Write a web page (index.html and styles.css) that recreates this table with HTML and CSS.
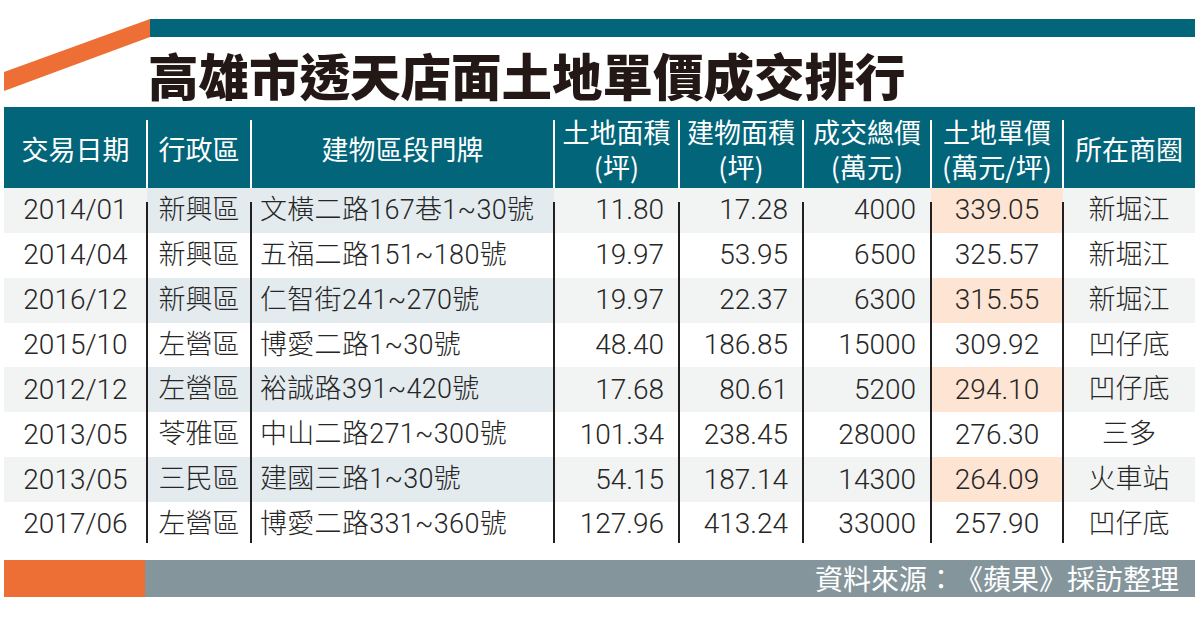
FILE: index.html
```html
<!DOCTYPE html>
<html lang="zh-Hant">
<head>
<meta charset="utf-8">
<title>高雄市透天店面土地單價成交排行</title>
<link rel="stylesheet" href="styles.css">
</head>
<body>
<div class="page">
  <div class="top">
    <svg class="slash" width="146" height="107" viewBox="0 0 146 107" aria-hidden="true">
      <polygon points="0,72 146,19 146,37 0,91" fill="#ee6f35"/>
    </svg>
    <div class="top-main">
      <div class="bar"></div>
      <h1 class="title">高雄市透天店面土地單價成交排行</h1>
    </div>
  </div>

  <div class="table">
    <div class="thead">
      <div class="c">交易日期</div>
      <div class="c">行政區</div>
      <div class="c">建物區段門牌</div>
      <div class="c"><span class="ln">土地面積</span><span class="ln">(坪)</span></div>
      <div class="c"><span class="ln">建物面積</span><span class="ln">(坪)</span></div>
      <div class="c"><span class="ln">成交總價</span><span class="ln">(萬元)</span></div>
      <div class="c"><span class="ln">土地單價</span><span class="ln">(萬元/坪)</span></div>
      <div class="c">所在商圈</div>
    </div>
    <div class="tbody">
      <div class="row odd">
        <div class="c">2014/01</div><div class="c b cj">新興區</div><div class="c b l">文橫二路167巷1~30號</div>
        <div class="c r">11.80</div><div class="c r">17.28</div><div class="c r">4000</div><div class="c o">339.05</div><div class="c cj">新堀江</div>
      </div>
      <div class="row">
        <div class="c">2014/04</div><div class="c b cj">新興區</div><div class="c b l">五福二路151~180號</div>
        <div class="c r">19.97</div><div class="c r">53.95</div><div class="c r">6500</div><div class="c o">325.57</div><div class="c cj">新堀江</div>
      </div>
      <div class="row odd">
        <div class="c">2016/12</div><div class="c b cj">新興區</div><div class="c b l">仁智街241~270號</div>
        <div class="c r">19.97</div><div class="c r">22.37</div><div class="c r">6300</div><div class="c o">315.55</div><div class="c cj">新堀江</div>
      </div>
      <div class="row">
        <div class="c">2015/10</div><div class="c b cj">左營區</div><div class="c b l">博愛二路1~30號</div>
        <div class="c r">48.40</div><div class="c r">186.85</div><div class="c r">15000</div><div class="c o">309.92</div><div class="c cj">凹仔底</div>
      </div>
      <div class="row odd">
        <div class="c">2012/12</div><div class="c b cj">左營區</div><div class="c b l">裕誠路391~420號</div>
        <div class="c r">17.68</div><div class="c r">80.61</div><div class="c r">5200</div><div class="c o">294.10</div><div class="c cj">凹仔底</div>
      </div>
      <div class="row">
        <div class="c">2013/05</div><div class="c b cj">苓雅區</div><div class="c b l">中山二路271~300號</div>
        <div class="c r">101.34</div><div class="c r">238.45</div><div class="c r">28000</div><div class="c o">276.30</div><div class="c cj">三多</div>
      </div>
      <div class="row odd">
        <div class="c">2013/05</div><div class="c b cj">三民區</div><div class="c b l">建國三路1~30號</div>
        <div class="c r">54.15</div><div class="c r">187.14</div><div class="c r">14300</div><div class="c o">264.09</div><div class="c cj">火車站</div>
      </div>
      <div class="row">
        <div class="c">2017/06</div><div class="c b cj">左營區</div><div class="c b l">博愛二路331~360號</div>
        <div class="c r">127.96</div><div class="c r">413.24</div><div class="c r">33000</div><div class="c o">257.90</div><div class="c cj">凹仔底</div>
      </div>
    </div>
  </div>

  <div class="footer">
    <div class="f-orange"></div>
    <div class="f-gray">資料來源：《蘋果》採訪整理</div>
  </div>
</div>
</body>
</html>
```

FILE: styles.css
```css
html, body {
  margin: 0;
  padding: 0;
  background: #ffffff;
}

.page {
  width: 1200px;
  height: 628px;
  overflow: hidden;
  font-family: Roboto, "Noto Sans CJK TC", sans-serif;
  text-spacing-trim: space-all;
  --cols: 143px 104px 303px 125px 124px 128px 132px 1fr;
  --teal: #02657a;
}

/* ---------- top ---------- */
.top {
  display: flex;
  height: 107px;
  padding-left: 4px;
}

.slash {
  flex: none;
  display: block;
}

.top-main {
  flex: 1;
  min-width: 0;
  padding-top: 19px;
  margin-right: 5px;
}

.bar {
  height: 18px;
  background: var(--teal);
}

.title {
  margin: 11px 0 0 -2px;
  font-family: "Noto Sans CJK TC", sans-serif;
  font-weight: 900;
  font-size: 50.5px;
  line-height: 52px;
  color: #231815;
  white-space: nowrap;
}

/* ---------- table ---------- */
.table {
  margin: 0 5px 0 4px;
}

.thead {
  display: grid;
  grid-template-columns: var(--cols);
  height: 81px;
  background: var(--teal);
  color: #ffffff;
  font-family: "Noto Sans CJK TC", sans-serif;
  font-weight: 400;
  font-size: 27px;
  line-height: 35px;
}

.c {
  position: relative;
  display: flex;
  align-items: center;
  justify-content: center;
  text-align: center;
  white-space: nowrap;
}

.thead .c {
  flex-direction: column;
  padding-top: 2px;
}

.ln {
  display: block;
  height: 35px;
  line-height: 35px;
}

.c + .c::before {
  content: "";
  position: absolute;
  left: -1px;
  top: 0;
  bottom: 0;
  width: 2px;
  background: #231f20;
}

.thead .c + .c::before {
  top: 13px;
  width: 1.5px;
  background: #ffffff;
}

.row {
  display: grid;
  grid-template-columns: var(--cols);
  height: 44.86px;
  font-weight: 300;
  font-size: 28px;
  line-height: 1;
  color: #262626;
}

.row:first-child .c + .c::before {
  top: 14px;
}

.row:last-child .c + .c::before {
  bottom: 4px;
}

.row.odd .c {
  background: #f2f3f3;
}

.row.odd .c.b {
  background: #e3ebee;
}

.row.odd .c.o {
  background: #fde4d3;
}

.c.l {
  justify-content: flex-start;
  padding-left: 9px;
  font-size: 27px;
  letter-spacing: 0.3px;
}

.c.r {
  justify-content: flex-end;
  padding-right: 15px;
}

.cj {
  font-size: 27px;
}

/* ---------- footer ---------- */
.footer {
  display: flex;
  height: 37px;
  margin: 13px 5px 0 4px;
}

.f-orange {
  flex: none;
  width: 141px;
  background: #ee6f35;
}

.f-gray {
  flex: 1;
  display: flex;
  align-items: center;
  justify-content: flex-end;
  padding-right: 16px;
  background: #85959c;
  color: #ffffff;
  font-family: "Noto Sans CJK TC", sans-serif;
  font-weight: 400;
  font-size: 28px;
  line-height: 1;
}
```
